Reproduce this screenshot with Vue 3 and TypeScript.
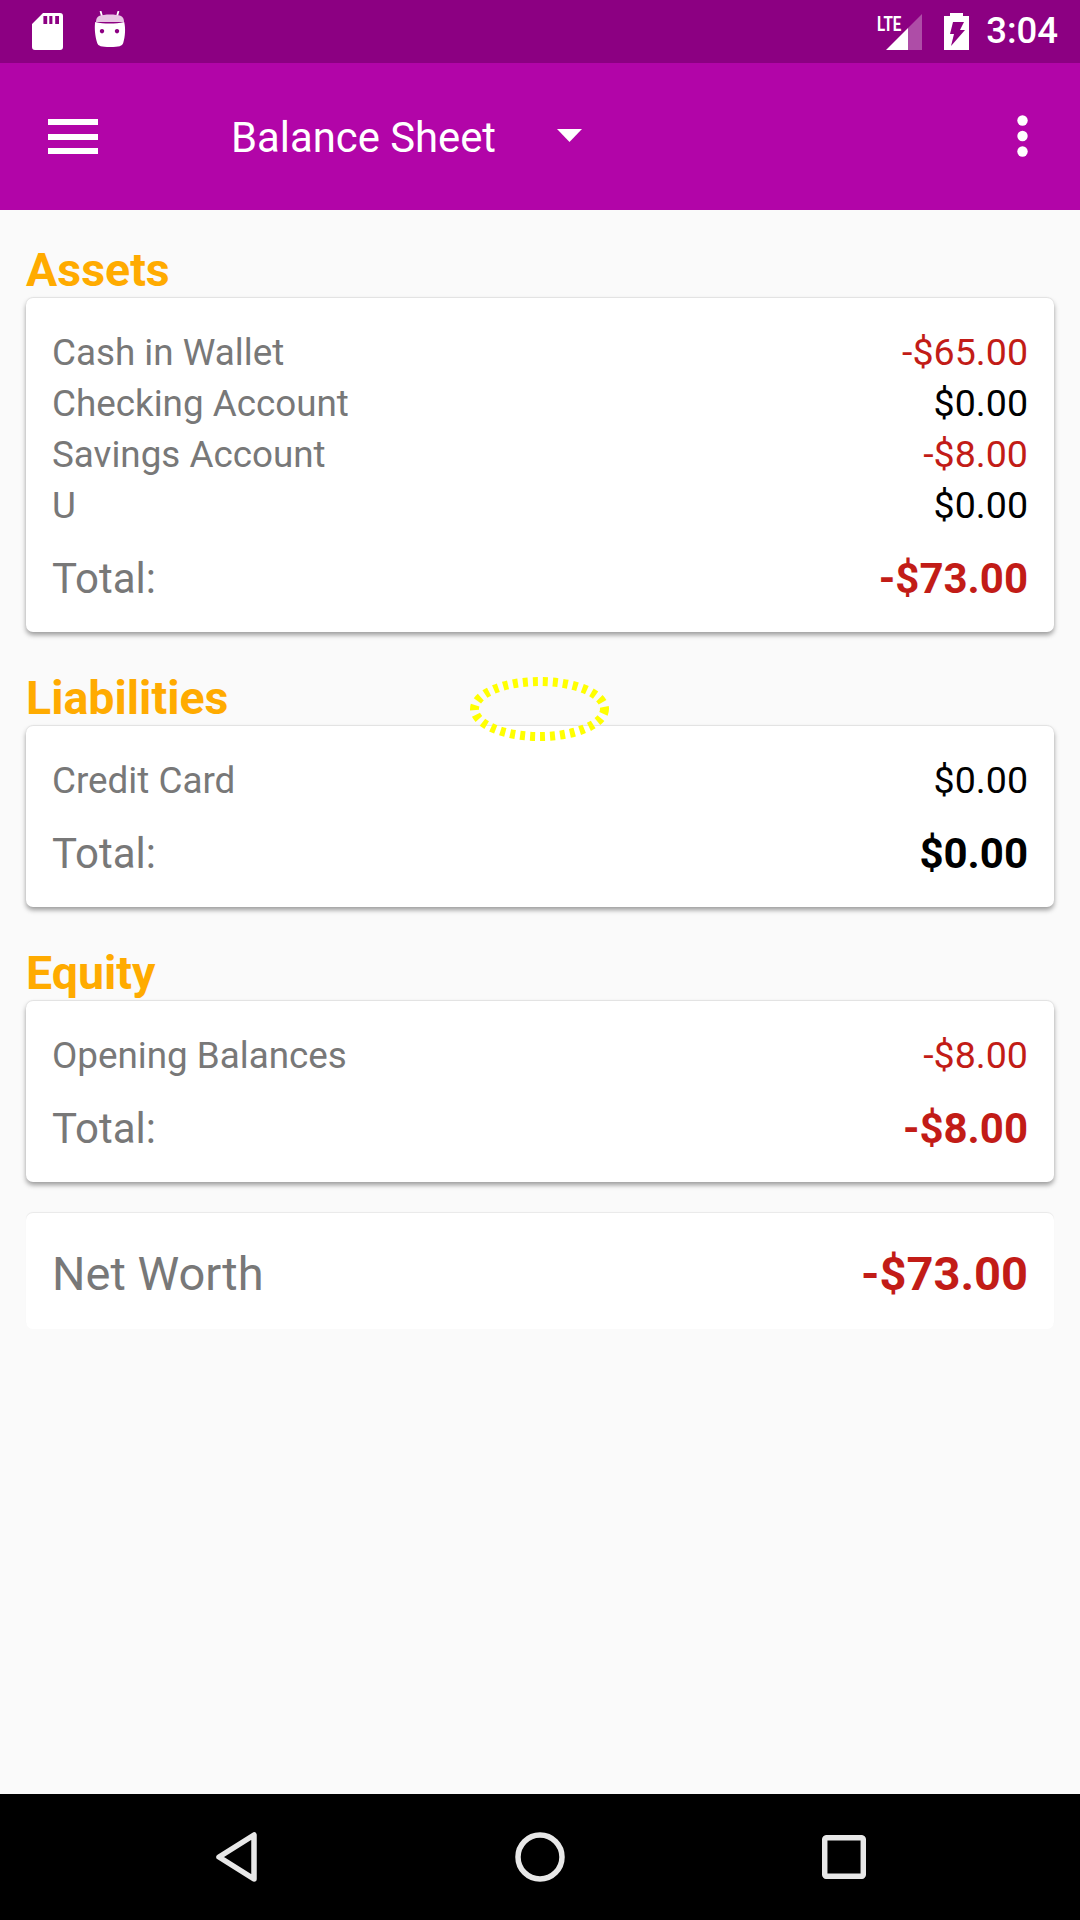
<script setup lang="ts">
interface Row { name: string; value: string; negative: boolean }
interface Section { title: string; rows: Row[]; total: string; negative: boolean }

const sections: Section[] = [
  {
    title: 'Assets',
    rows: [
      { name: 'Cash in Wallet', value: '-$65.00', negative: true },
      { name: 'Checking Account', value: '$0.00', negative: false },
      { name: 'Savings Account', value: '-$8.00', negative: true },
      { name: 'U', value: '$0.00', negative: false },
    ],
    total: '-$73.00',
    negative: true,
  },
  {
    title: 'Liabilities',
    rows: [{ name: 'Credit Card', value: '$0.00', negative: false }],
    total: '$0.00',
    negative: false,
  },
  {
    title: 'Equity',
    rows: [{ name: 'Opening Balances', value: '-$8.00', negative: true }],
    total: '-$8.00',
    negative: true,
  },
]
</script>

<template>
  <div class="screen">
    <header class="status">
      <svg class="sd" viewBox="0 0 31 37" width="31" height="37">
        <path fill="#fff" fill-rule="evenodd" d="M11 0h17a3 3 0 0 1 3 3v31a3 3 0 0 1-3 3H3a3 3 0 0 1-3-3V11zM11.4 3v8h3.8V3zM17.3 3v8h3.1V3zM23.2 3v8H27V3z" />
      </svg>
      <svg class="droid" viewBox="0 0 32 37" width="32" height="37">
        <path stroke="#fff" stroke-width="1.8" fill="none" d="M6.5 0l2 7M24.5 0l-2 7" />
        <path fill="#e8c4e4" d="M2 11c0-3 1-5 3-6 5-2 17-2 22 0 2 1 3 3 3 6z" />
        <path fill="#fff" fill-rule="evenodd" d="M1.200 11c9 2 20 2 29 0 1.500 6 1 15-1 21-1 3-4 4-13 4s-12-1-13-4c-2-6-3-15-2-21zM8 18a2.200 2.200 0 1 0 .01 0zM23 18a2.200 2.200 0 1 0 .01 0z" />
      </svg>
      <span class="status-gap"></span>
      <div class="signal">
        <span class="lte">LTE</span>
        <svg viewBox="0 0 46 37" width="46" height="37">
          <path fill="#fff" d="M31 37V15L9 37z" />
          <path fill="#fff" opacity=".3" d="M31 37h14V1L31 15z" />
        </svg>
      </div>
      <svg class="battery" viewBox="0 0 25 37" width="25" height="37">
        <path fill="#fff" fill-rule="evenodd" d="M6 0h13v3h6v34H0V3h6zM9 9h11l-4 8h5L7 33l3-12H6z" />
      </svg>
      <span class="time">3:04</span>
    </header>

    <nav class="toolbar">
      <svg class="menu" viewBox="0 0 50 36" width="50" height="36">
        <path fill="#fff" d="M0 0h50v6H0zM0 15h50v6H0zM0 29h50v6H0z" />
      </svg>
      <span class="title">Balance Sheet</span>
      <svg class="caret" viewBox="0 0 25 13" width="25" height="13">
        <path fill="#fff" d="M0 0h25L12.500 13z" />
      </svg>
      <span class="toolbar-gap"></span>
      <svg class="dots" viewBox="0 0 11 42" width="11" height="42">
        <circle cx="5.500" cy="5.500" r="5.200" fill="#fff" />
        <circle cx="5.500" cy="21" r="5.200" fill="#fff" />
        <circle cx="5.500" cy="36.500" r="5.200" fill="#fff" />
      </svg>
    </nav>

    <main class="content">
      <section v-for="s in sections" :key="s.title" class="section">
        <h2 class="heading">{{ s.title }}</h2>
        <div class="card">
          <div v-for="r in s.rows" :key="r.name" class="row">
            <span class="name">{{ r.name }}</span>
            <span :class="['value', { neg: r.negative }]">{{ r.value }}</span>
          </div>
          <div class="total">
            <span class="total-label">Total:</span>
            <span :class="['total-value', { neg: s.negative }]">{{ s.total }}</span>
          </div>
        </div>
      </section>
      <div class="net">
        <span class="net-label">Net Worth</span>
        <span class="net-value neg">-$73.00</span>
      </div>
      <svg class="ring" viewBox="0 0 139 64" width="139" height="64">
        <ellipse cx="69.500" cy="32" rx="65" ry="27.500" fill="none" stroke="#ffff00" stroke-width="9" stroke-dasharray="5 5" />
      </svg>
    </main>

    <footer class="navbar">
      <svg viewBox="0 0 42 50" width="42" height="50">
        <path fill="none" stroke="#e8e8e8" stroke-width="5.500" stroke-linejoin="round" d="M38 3v44L3 25z" />
      </svg>
      <svg viewBox="0 0 50 50" width="50" height="50">
        <circle cx="25" cy="25" r="22" fill="none" stroke="#e8e8e8" stroke-width="5.500" />
      </svg>
      <svg viewBox="0 0 44 44" width="44" height="44">
        <rect x="2.700" y="2.700" width="38.600" height="38.600" rx="2" fill="none" stroke="#e8e8e8" stroke-width="5.500" />
      </svg>
    </footer>
  </div>
</template>

<style>
html, body { margin: 0; background: #fafafa; }
</style>

<style scoped>
.screen {
  width: 1080px;
  height: 1920px;
  display: flex;
  flex-direction: column;
  background: #fafafa;
  font-family: Roboto, "Liberation Sans", sans-serif;
  overflow: hidden;
}
.status {
  height: 63px;
  flex: none;
  background: #8c0082;
  display: flex;
  align-items: center;
  padding: 0 22px 0 32px;
  box-sizing: border-box;
  color: #fff;
}
.droid { margin-left: 31px; margin-top: -4px; }
.status-gap { flex: 1; }
.signal { position: relative; height: 37px; margin-right: 21px; }
.signal svg { display: block; }
.lte {
  position: absolute;
  left: 0;
  top: -1px;
  font-size: 21px;
  line-height: 24px;
  font-weight: 700;
  transform: scaleX(.72);
  transform-origin: left top;
}
.time { margin-left: 17px; font-size: 36.5px; font-weight: 500; line-height: 1; }
.toolbar {
  height: 147px;
  flex: none;
  background: #b205a8;
  display: flex;
  align-items: center;
  padding: 0 52px 0 48px;
  box-sizing: border-box;
  color: #fff;
}
.title { margin-left: 133px; font-size: 41.8px; line-height: 49px; padding-top: 2px; }
.caret { margin-left: 61px; margin-top: -2px; }
.dots { margin-top: -1px; }
.toolbar-gap { flex: 1; }
.content {
  flex: 1;
  position: relative;
  padding: 32px 26px 0;
}
.section { margin-bottom: 38px; }
.section:nth-child(3) { margin-bottom: 31px; }
.heading {
  margin: 0;
  font-size: 46.5px;
  line-height: 56px;
  font-weight: 700;
  color: #ffab00;
}
.card {
  background: #fff;
  border-radius: 7px;
  padding: 28px 26px 29px;
  box-shadow: 0 -1px 1px rgba(0, 0, 0, .07), 0 3px 5px rgba(0, 0, 0, .38);
}
.row {
  display: flex;
  justify-content: space-between;
  align-items: baseline;
  height: 51px;
  line-height: 53px;
  font-size: 36.8px;
}
.name { color: #787878; }
.value { color: #000; font-size: 37.6px; }
.total {
  display: flex;
  justify-content: space-between;
  align-items: baseline;
  height: 49px;
  line-height: 49px;
  margin-top: 24px;
}
.total-label { font-size: 42px; color: #787878; }
.total-value { font-size: 42px; font-weight: 700; color: #000; }
.net {
  display: flex;
  justify-content: space-between;
  align-items: center;
  height: 116px;
  padding: 4px 26px 0;
  box-sizing: border-box;
  background: #fff;
  border-radius: 7px;
  box-shadow: 0 -1px 1px rgba(0, 0, 0, .07);
}
.net-label { font-size: 47px; color: #787878; }
.net-value { font-size: 47px; font-weight: 700; }
.value.neg, .total-value.neg, .net-value.neg { color: #c21c17; }
.ring {
  position: absolute;
  left: 470px;
  top: 467px;
}
.navbar {
  height: 126px;
  flex: none;
  background: #000;
  display: flex;
  align-items: center;
  padding: 0 214px 0 216px;
  box-sizing: border-box;
  justify-content: space-between;
}
</style>
